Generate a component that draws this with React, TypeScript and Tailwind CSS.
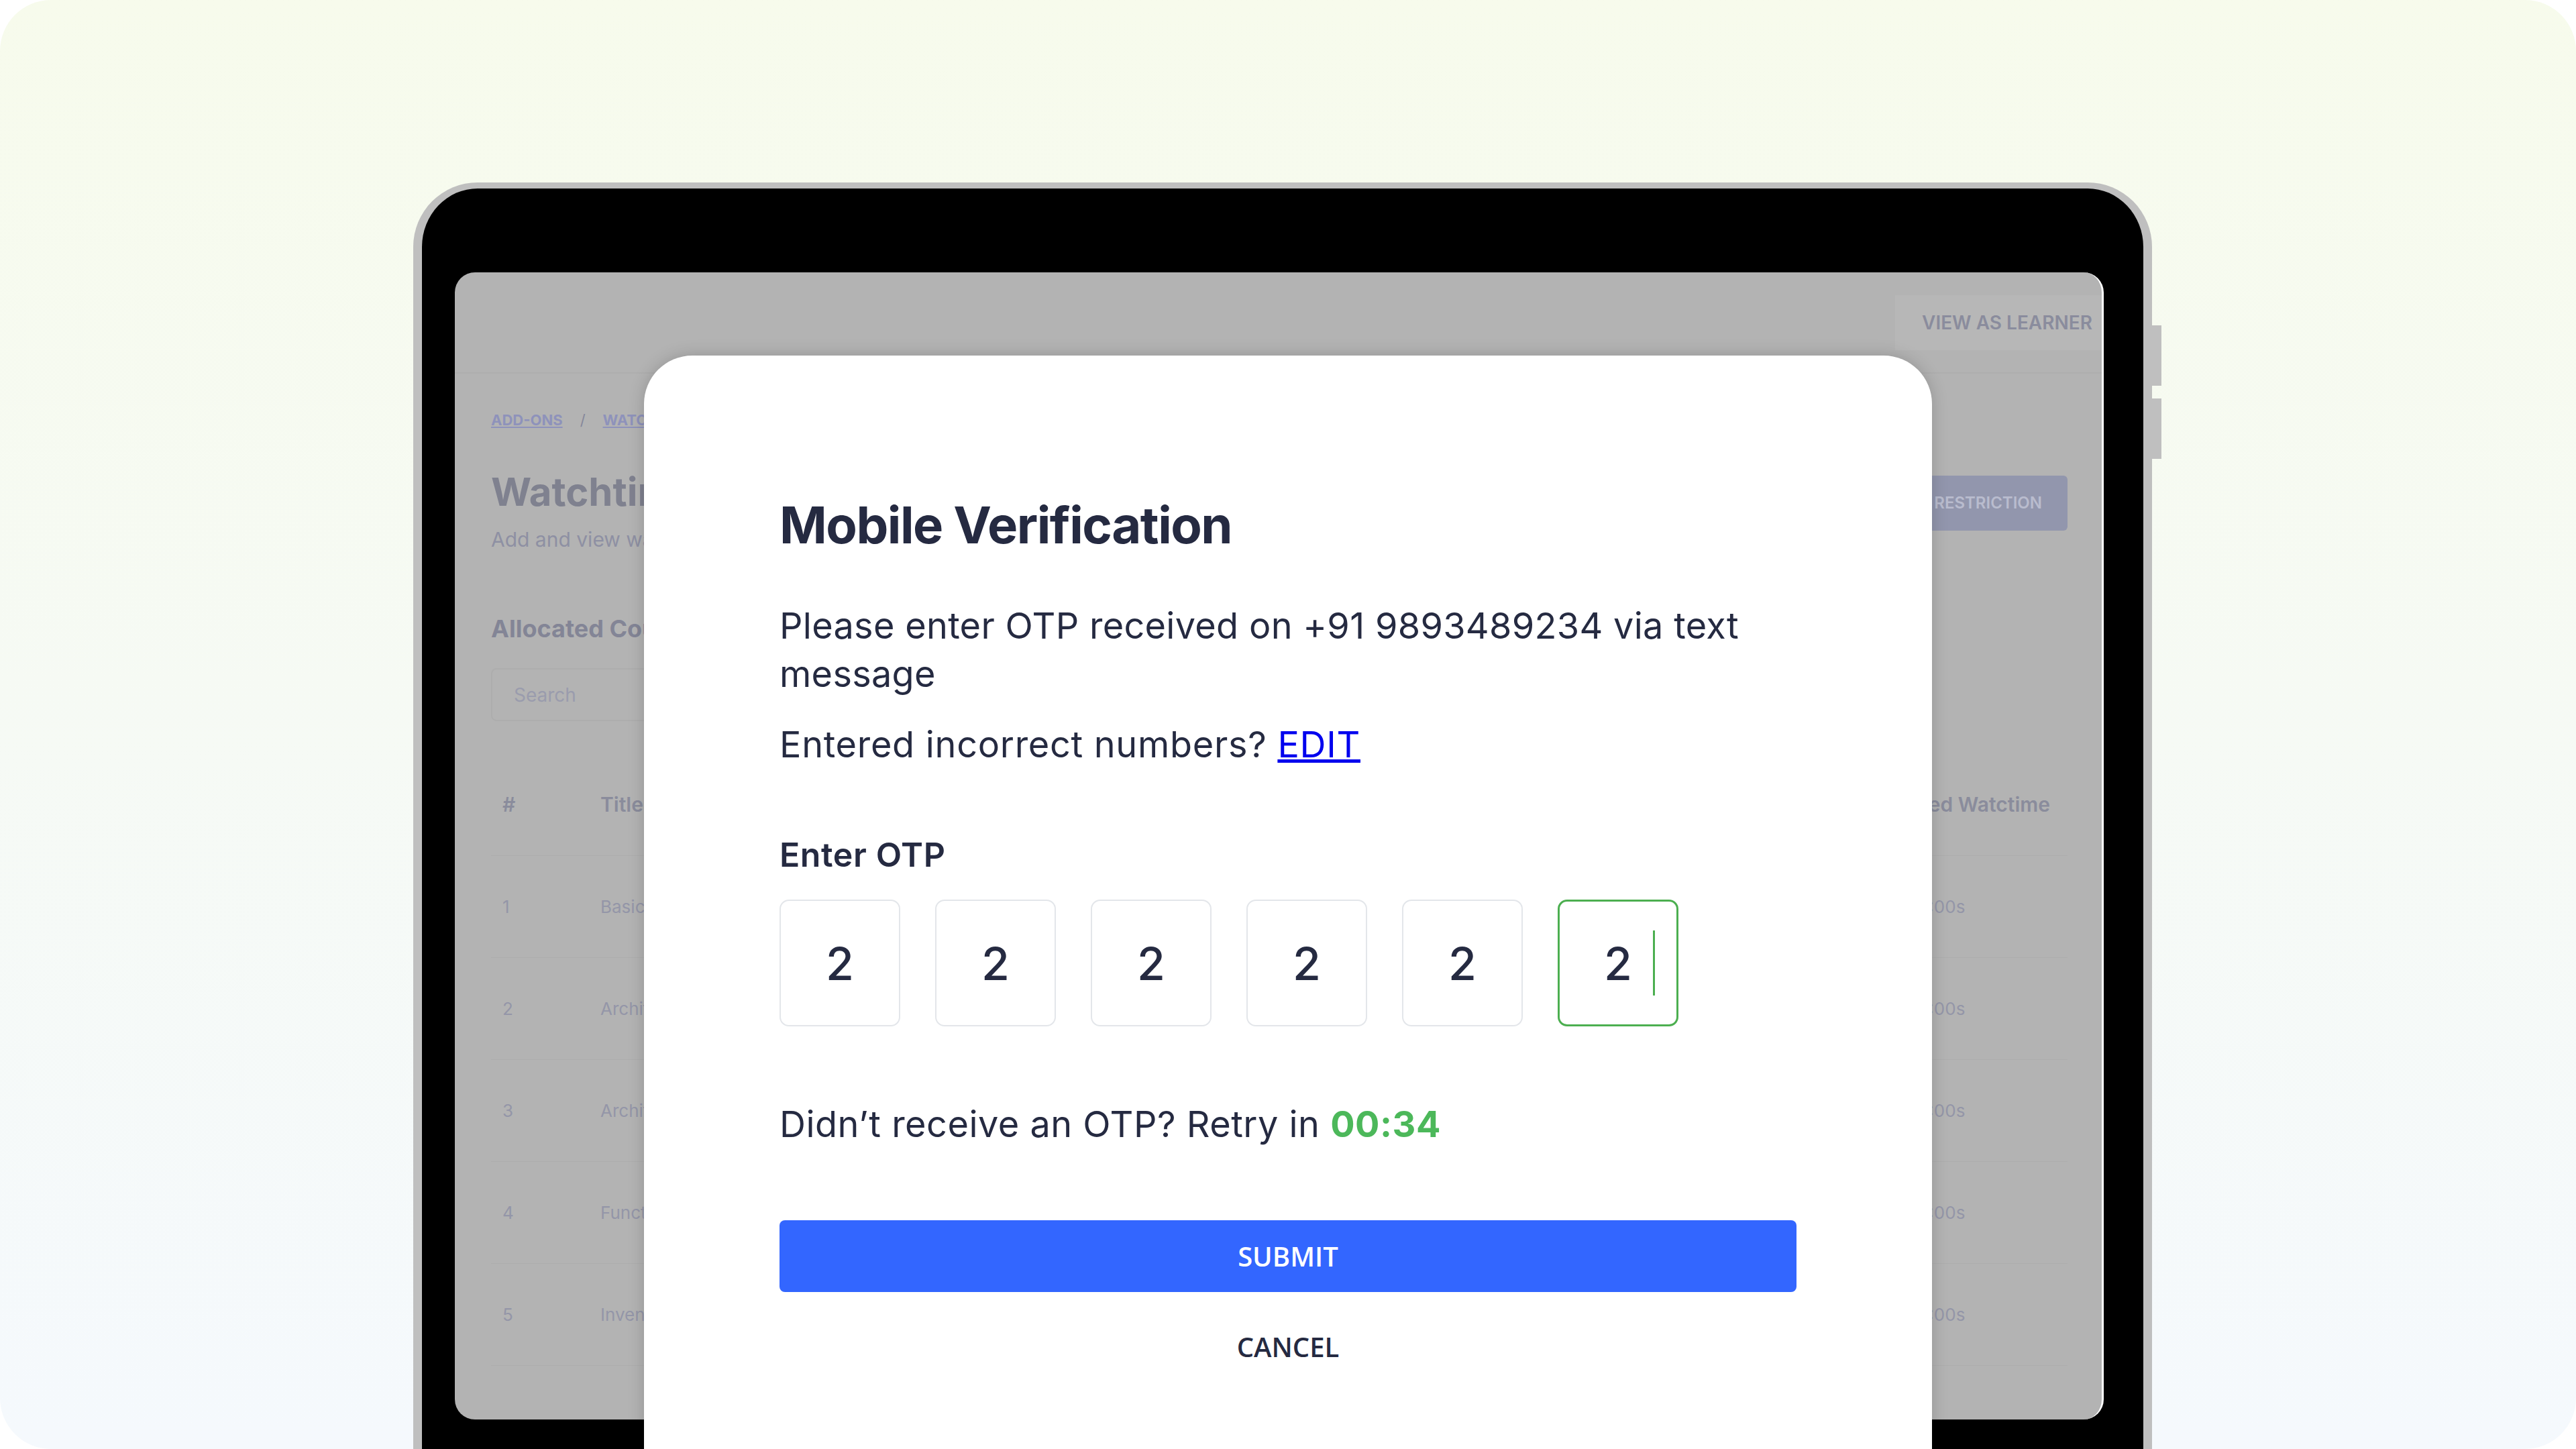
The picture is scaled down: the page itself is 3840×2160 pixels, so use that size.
import React from 'react';

const rows = [
  { id: 1, title: 'Basic Accounting Principles', time: '1 hr 10:00s' },
  { id: 2, title: 'Architecture Fundamentals', time: '1 hr 10:00s' },
  { id: 3, title: 'Architecture Design Patterns', time: '1 hr 10:00s' },
  { id: 4, title: 'Functional Programming', time: '1 hr 10:00s' },
  { id: 5, title: 'Inventory Management', time: '1 hr 10:00s' },
];

const otp = ['2', '2', '2', '2', '2', '2'];

// Dimmed dashboard that sits behind the dialog
const BackgroundPage: React.FC = () => (
  <div className="flex h-[1710px] flex-col overflow-hidden rounded-[30px] border-r-[3px] border-white bg-[#b3b3b3] font-['Inter',sans-serif]">
    <div className="flex h-[151px] shrink-0 justify-end border-b-2 border-[#aeaeae] pt-[34px]">
      <div className="flex h-[82px] items-center bg-[#b7b7b7] pl-[40px] pr-[14px] text-[28px] font-semibold text-[#8a8c9d]">
        VIEW AS LEARNER
      </div>
    </div>

    <div className="pl-[54px] pr-[51px]">
      <div className="flex items-center gap-[26px] pt-[54px] text-[22px] font-bold leading-[30px] text-[#8e92bb]">
        <span className="underline">ADD-ONS</span>
        <span className="font-normal text-[#85879a]">/</span>
        <span className="underline">WATCHTIME</span>
      </div>

      <div className="mt-[63px] flex items-start justify-between">
        <div>
          <div className="text-[58px] font-bold leading-none text-[#7f818f]">Watchtime Restrictions</div>
          <div className="mt-[24px] text-[30px] leading-[36px] text-[#8e90a3]">
            Add and view watchtime restrictions for your learners
          </div>
        </div>
        <div className="mt-[5px] flex h-[82px] items-center rounded-[6px] bg-[#9296ad] px-[38px] text-[24px] font-semibold text-[#b9bcce]">
          ADD RESTRICTION
        </div>
      </div>

      <div className="mt-[93px] text-[36px] font-bold leading-[44px] text-[#838596]">Allocated Courses</div>

      <div className="mt-[37px] flex h-[79px] w-[820px] items-center rounded-[8px] border-2 border-[#adadad] pl-[32px] text-[28px] text-[#9a9cad]">
        Search
      </div>

      <div className="mt-[49px]">
        <div className="grid h-[152px] grid-cols-[163px_1fr_330px] items-center border-b border-[#adadad] text-[30px] font-semibold text-[#8a8c9c]">
          <div className="pl-[17px]">#</div>
          <div>Title</div>
          <div className="whitespace-nowrap pr-[26px] text-right">Allocated Watctime</div>
        </div>
        {rows.map((r) => (
          <div
            key={r.id}
            className="grid h-[152px] grid-cols-[163px_1fr_330px] items-center border-b border-[#adadad] text-[26px] text-[#9496a8]"
          >
            <div className="pl-[17px]">{r.id}</div>
            <div className="whitespace-nowrap">{r.title}</div>
            <div className="whitespace-nowrap pl-[46px]">{r.time}</div>
          </div>
        ))}
      </div>
    </div>
  </div>
);

const VerificationModal: React.FC = () => (
  <div className="absolute left-[960px] top-[530px] h-[1700px] w-[1920px] rounded-t-[72px] bg-white px-[202px] pt-[214px] font-['Inter',sans-serif] text-[#252a41] shadow-[0_0_24px_rgba(0,0,0,0.18)]">
    <h2 className="text-[76px] font-bold leading-none tracking-[-1.5px]">Mobile Verification</h2>

    <p className="mt-[77px] text-[54px] leading-[72px] tracking-[0.3px]">
      Please enter OTP received on +91 9893489234 via text message
    </p>
    <p className="mt-[33px] text-[54px] leading-[72px] tracking-[0.7px]">
      Entered incorrect numbers?{' '}
      <a href="#" className="text-[#0000ee] underline">
        EDIT
      </a>
    </p>

    <div className="mt-[103px] text-[50px] font-semibold leading-none tracking-[0.6px]">Enter OTP</div>

    <div className="mt-[42px] flex gap-[52px]">
      {otp.map((d, i) => {
        const active = i === otp.length - 1;
        return (
          <div
            key={i}
            className={
              active
                ? 'relative flex h-[189px] w-[180px] items-center justify-center rounded-[14px] border-[3px] border-[#4caf50] text-[68px] font-medium'
                : 'relative flex h-[189px] w-[180px] items-center justify-center rounded-[14px] border-2 border-[#e3e6ea] text-[68px] font-medium'
            }
          >
            {d}
            {active && <span className="absolute left-[139px] top-[43px] h-[97px] w-[3px] bg-[#4caf50]" />}
          </div>
        );
      })}
    </div>

    <p className="mt-[110px] text-[54px] leading-[72px] tracking-[0.5px]">
      Didn’t receive an OTP? Retry in <span className="font-bold text-[#4cb85a]">00:34</span>
    </p>

    <button className="mt-[107px] flex h-[107px] w-full items-center justify-center rounded-[8px] bg-[#3366ff] font-['Open_Sans',sans-serif] text-[40px] font-semibold leading-none text-white">
      SUBMIT
    </button>

    <div className="mt-[62px] text-center font-['Open_Sans',sans-serif] text-[40px] font-semibold leading-none">
      CANCEL
    </div>
  </div>
);

const App: React.FC = () => {
  return (
    <div className="h-[2160px] w-[3840px] bg-white">
      <div className="relative h-full w-full overflow-hidden rounded-[76px] bg-gradient-to-b from-[#f7fbec] to-[#f5f9fd] pl-[616px] pt-[272px]">
        {/* tablet frame */}
        <div className="relative h-[1920px] w-[2592px] rounded-t-[96px] border-x-[13px] border-t-[9px] border-[#bfbfbf] bg-black pl-[49px] pr-[59px] pt-[125px]">
          <span className="absolute -right-[27px] top-[204px] h-[90px] w-[14px] bg-[#bfbfbf]" />
          <span className="absolute -right-[27px] top-[313px] h-[90px] w-[14px] bg-[#bfbfbf]" />
          <BackgroundPage />
        </div>

        <VerificationModal />
      </div>
    </div>
  );
};

export default App;
